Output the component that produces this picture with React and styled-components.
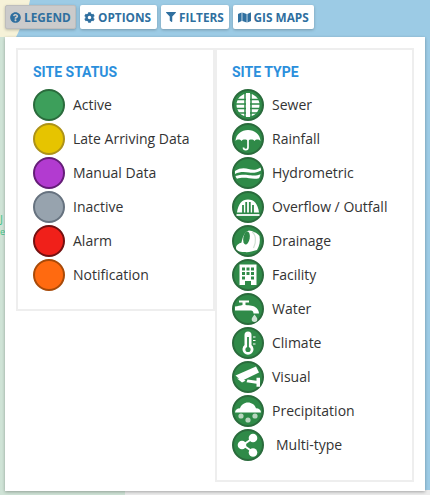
import styled, { createGlobalStyle } from "styled-components";
import { FaQuestionCircle, FaCog, FaFilter, FaMap } from "react-icons/fa";

const GlobalStyle = createGlobalStyle`
  html, body {
    margin: 0;
    padding: 0;
    background: #9ccbe5;
  }
`;

const Page = styled.div`
  position: relative;
  width: 430px;
  height: 495px;
  overflow: hidden;
  box-sizing: border-box;
  padding: 5px 0 0 5px;
  font-family: "Open Sans", "Liberation Sans", sans-serif;
`;

const MapDrawing = styled.svg`
  position: absolute;
  left: 0;
  top: 0;
`;

const Toolbar = styled.div`
  position: relative;
  display: flex;
  height: 24px;
  gap: 4px;
`;

const ToolButton = styled.button`
  display: flex;
  align-items: center;
  gap: 3px;
  box-sizing: border-box;
  width: ${(p) => p.$width}px;
  height: 24px;
  padding: 0 0 0 ${(p) => p.$inset}px;
  border: ${(p) => (p.$active ? "1px solid #bdbdbd" : "none")};
  border-radius: 2px;
  background: ${(p) => (p.$active ? "#cbcbcb" : "#fff")};
  box-shadow: 0 1px 3px rgba(0, 0, 0, 0.25);
  color: #2f6f9f;
  font-family: inherit;
  font-size: 11.8px;
  font-weight: 700;
  white-space: nowrap;
`;

const Panel = styled.div`
  position: relative;
  box-sizing: border-box;
  display: grid;
  grid-template-columns: 199px 199px;
  align-items: start;
  width: 419.5px;
  height: 454px;
  margin-top: 8px;
  padding: 11px 0 0 11px;
  background: #fff;
  box-shadow: 0 1px 3px rgba(0, 0, 0, 0.3);
`;

const Card = styled.section`
  box-sizing: border-box;
  height: ${(p) => p.$height}px;
  padding: 13px 0 0 15px;
  border: 2px solid #eeeeee;
`;

const Heading = styled.h3`
  margin: 0 0 7px;
  color: #2b8fdc;
  font-family: Roboto, "Liberation Sans", sans-serif;
  font-size: 14px;
  font-weight: 700;
  line-height: 18px;
`;

const Row = styled.div`
  display: flex;
  align-items: center;
  height: 34px;
  gap: ${(p) => p.$gap}px;
  color: #333;
  font-size: 14px;
`;

const Dot = styled.span`
  box-sizing: border-box;
  width: 32px;
  height: 32px;
  flex: none;
  border-radius: 50%;
  border: 2px solid ${(p) => p.$edge};
  background: ${(p) => p.$fill};
`;

const Label = styled.span`
  position: relative;
  top: -1px;
`;

const IconSvg = styled.svg`
  flex: none;
  display: block;
`;

const GREEN = "#2f8a48";

const TypeIcon = ({ children }) => (
  <IconSvg width="32" height="32" viewBox="0 0 32 32">
    <circle cx="16" cy="16" r="15" fill={GREEN} stroke="#2a6b3c" strokeWidth="2" />
    {children}
  </IconSvg>
);

const statuses = [
  ["Active", "#3d9f5b", "#2a6b3c"],
  ["Late Arriving Data", "#e6c400", "#ad9218"],
  ["Manual Data", "#b23bd0", "#651d78"],
  ["Inactive", "#97a3ae", "#66727f"],
  ["Alarm", "#f0201a", "#741010"],
  ["Notification", "#ff6a10", "#a84a08"],
];

const types = [
  [
    "Sewer",
    <>
      <circle cx="16" cy="16" r="11.5" fill="#fff" />
      <path d="M5 10.500h22M4 15h24M4 19.500h24M6 24h20" stroke={GREEN} strokeWidth="1.700" />
      <path d="M13 4v24M19 4v24" stroke={GREEN} strokeWidth="1.500" />
      <path d="M16 4v24" stroke="#fff" strokeWidth="4" />
    </>,
  ],
  [
    "Rainfall",
    <>
      <path d="M3.500 18C4 11 9.500 7 16 7s12 4 12.500 11c-1.700-1.900-4.500-1.900-6 0-1.500-1.900-4.800-1.900-6.500 0-1.700-1.900-5-1.900-6.500 0-1.500-1.900-4.300-1.900-6 0z" fill="#fff" />
      <path d="M16 16v8.500c0 2.800-4.500 2.800-4.500 0" fill="none" stroke="#fff" strokeWidth="1.700" />
    </>,
  ],
  [
    "Hydrometric",
    <>
      <path d="M3 14c5-3.500 10-3 13.500-2s8 1.500 12-1.500c.5 1 .5 2 .5 3-4 2.500-9 2.500-12 2-3.500-.6-9.500-1.200-14 1.500z" fill="#fff" />
      <path d="M3.500 19c6-2 12-1.200 15-.7s7 .5 10-1c-.5 2-1 3-1.500 4-3 .8-7 .5-10 0s-8-1-12 .5c-.7-1-1.200-1.800-1.500-2.800z" fill="#fff" />
    </>,
  ],
  [
    "Overflow / Outfall",
    <>
      <path d="M5 21.500C6 13 10 8.500 16 8.500s10 4.500 11 13z" fill="#fff" />
      <path d="M11 22v-8M14.200 22V11M17.800 22V11M21 22v-8" stroke={GREEN} strokeWidth="1.800" />
      <path d="M4.500 24h23" stroke="#fff" strokeWidth="1.800" />
    </>,
  ],
  [
    "Drainage",
    <>
      <path d="M4 23c0-3 3-4.500 5.500-5.500 1-4.500 2.500-10.500 7.500-12 3 .5 8 2 10.500 5.500 1 5 0 10-2.500 14-5 1.500-8 2.500-13 2-4.500 0-8-1.500-8-4z" fill="#fff" />
      <ellipse cx="14.500" cy="13" rx="3.200" ry="6.500" fill={GREEN} transform="rotate(10 14.500 13)" />
      <path d="M20 7c3.500 2 5 9 1.500 16" fill="none" stroke="#cfe0d3" strokeWidth="1.200" />
    </>,
  ],
  [
    "Facility",
    <>
      <path d="M7.500 5.500h17v20.500h-17z" fill="#fff" />
      <path d="M10 8.500h3v3h-3zM14.500 8.500h3v3h-3zM19 8.500h3v3h-3zM10 13h3v3h-3zM14.500 13h3v3h-3zM19 13h3v3h-3zM10 17.500h3v3h-3zM19 17.500h3v3h-3zM13 22h6v4h-6z" fill={GREEN} />
    </>,
  ],
  [
    "Water",
    <>
      <path d="M3 13.500c3-.5 5-1 7.500-1.500V9.500H7V7.500h10v2h-3.500V12c4 .5 8.500.5 11 3 1.500 1.500 2.500 3.500 2.500 5.500h-5.500c0-2-1-3-2.500-3H3z" fill="#fff" />
      <path d="M22.500 21.500c1.700 2.200 2.800 3.500 2.800 4.700a2.800 2.800 0 0 1-5.600 0c0-1.200 1.100-2.500 2.800-4.700z" fill="#cfe3d4" />
    </>,
  ],
  [
    "Climate",
    <>
      <path d="M12.500 8a3.500 3.500 0 0 1 7 0v10a5.500 5.500 0 1 1-7 0z" fill="#fff" />
      <path d="M16 10v11" stroke={GREEN} strokeWidth="1.800" />
      <circle cx="16" cy="22.500" r="2.600" fill={GREEN} />
      <path d="M21 10h2.500M21 13.500h2.500M21 17h2.500" stroke="#fff" strokeWidth="1.200" />
    </>,
  ],
  [
    "Visual",
    <>
      <path d="M3.500 14.500L24 5.500l3 6-17.500 8.500z" fill="#fff" />
      <path d="M5 17.500l5 4 3.500-1.700-2.500-1.800z" fill="#fff" />
      <path d="M15.500 18.500l9 1.200v-3H28v9h-3.500v-3l-10-1.500z" fill="#fff" />
    </>,
  ],
  [
    "Precipitation",
    <>
      <path d="M3 17.500c0-2.700 2.200-4.300 5-4.300C9 10 12.200 7.500 16 7.500c3.500 0 6.800 2.200 8 5.700 3 0 5 1.600 5 4.300z" fill="#fff" />
      <circle cx="9" cy="21" r="2.600" fill="#b9d5bf" />
      <circle cx="23" cy="21" r="2.600" fill="#b9d5bf" />
      <circle cx="16" cy="25" r="2.600" fill="#b9d5bf" />
    </>,
  ],
  [
    "Multi-type",
    <>
      <path d="M21 9l-10 7 10 7" fill="none" stroke="#fff" strokeWidth="2" />
      <circle cx="21" cy="9" r="4.300" fill="#fff" />
      <circle cx="10" cy="16" r="4.300" fill="#fff" />
      <circle cx="21" cy="23.500" r="4.300" fill="#fff" />
    </>,
    12,
  ],
];

export default function App() {
  return (
    <Page>
      <GlobalStyle />
      <MapDrawing width="430" height="495" viewBox="0 0 430 495">
        <rect width="430" height="495" fill="#9ccbe5" />
        <path d="M0 0h30c-2 12-8 25-14 37H0z" fill="#f6f2d8" />
        <path d="M0 37h16v458H0z" fill="#cfe3d6" />
        <path d="M0 488h125v7H0z" fill="#cfe3d6" />
        <path d="M125 490h305v5H125z" fill="#ececec" />
        <text x="0" y="223" fill="#45c488" fontSize="11" fontFamily="Open Sans">J</text>
        <text x="0" y="235" fill="#45c488" fontSize="9" fontFamily="Open Sans">e</text>
      </MapDrawing>
      <Toolbar>
        <ToolButton $active $inset={4} $width={71}>
          <FaQuestionCircle size={11} />
          LEGEND
        </ToolButton>
        <ToolButton $inset={4} $width={77}>
          <FaCog size={11} />
          OPTIONS
        </ToolButton>
        <ToolButton $inset={5} $width={67.5}>
          <FaFilter size={10} />
          FILTERS
        </ToolButton>
        <ToolButton $inset={5} $width={81}>
          <FaMap size={13} />
          GIS MAPS
        </ToolButton>
      </Toolbar>
      <Panel>
        <Card $height={263}>
          <Heading>SITE STATUS</Heading>
          {statuses.map(([name, fill, edge]) => (
            <Row key={name} $gap={8}>
              <Dot $fill={fill} $edge={edge} />
              <Label>{name}</Label>
            </Row>
          ))}
        </Card>
        <Card $height={434}>
          <Heading>SITE TYPE</Heading>
          {types.map(([name, art, gap]) => (
            <Row key={name} $gap={gap || 8}>
              <TypeIcon>{art}</TypeIcon>
              <Label>{name}</Label>
            </Row>
          ))}
        </Card>
      </Panel>
    </Page>
  );
}
